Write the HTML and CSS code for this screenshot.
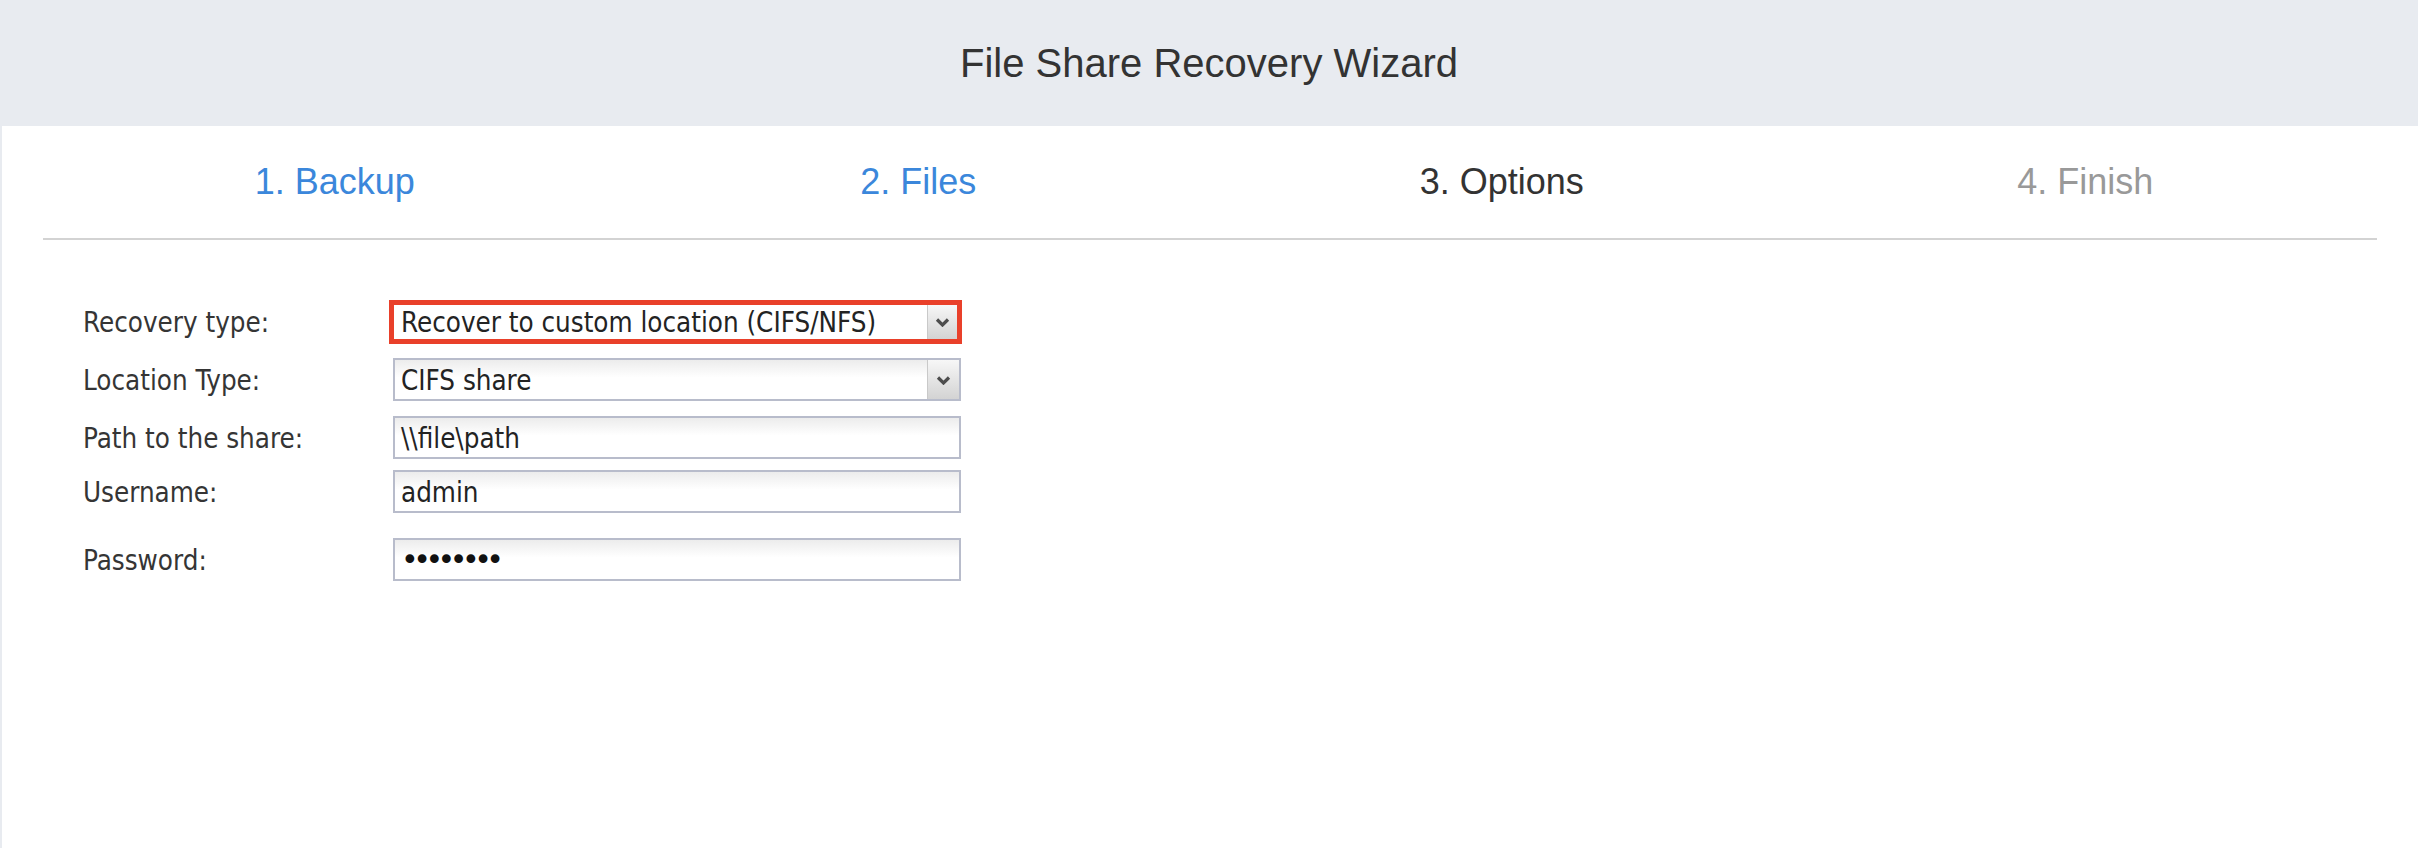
FILE: index.html
```html
<!DOCTYPE html>
<html lang="en">
<head>
<meta charset="utf-8">
<title>File Share Recovery Wizard</title>
<link rel="stylesheet" href="styles.css">
</head>
<body>
<header class="hdr">
  <h1 class="title">File Share Recovery Wizard</h1>
</header>
<main class="panel">
  <nav class="steps">
    <div class="step step-done">1. Backup</div>
    <div class="step step-done">2. Files</div>
    <div class="step step-current">3. Options</div>
    <div class="step step-next">4. Finish</div>
  </nav>
  <div class="divider"></div>
  <form class="form">
    <div class="row row-1">
      <div class="label">Recovery type:</div>
      <div class="box box-select box-red">
        <span class="val">Recover to custom location (CIFS/NFS)</span>
        <span class="btn"><svg class="chev" width="15" height="10" viewBox="0 0 15 10"><path d="M2 2.5 L7.5 8 L13 2.5" fill="none" stroke="#4d4d4d" stroke-width="3.2"/></svg></span>
      </div>
    </div>
    <div class="row row-2">
      <div class="label">Location Type:</div>
      <div class="box box-select">
        <span class="val">CIFS share</span>
        <span class="btn"><svg class="chev" width="15" height="10" viewBox="0 0 15 10"><path d="M2 2.5 L7.5 8 L13 2.5" fill="none" stroke="#4d4d4d" stroke-width="3.2"/></svg></span>
      </div>
    </div>
    <div class="row row-3">
      <div class="label">Path to the share:</div>
      <div class="box"><span class="val">\\file\path</span></div>
    </div>
    <div class="row row-4">
      <div class="label">Username:</div>
      <div class="box"><span class="val">admin</span></div>
    </div>
    <div class="row row-5">
      <div class="label">Password:</div>
      <div class="box"><span class="val dots">••••••••</span></div>
    </div>
  </form>
</main>
</body>
</html>
```
FILE: styles.css
```css
html, body {
  margin: 0;
  padding: 0;
}
body {
  background: #e8ebf0;
  font-family: "Liberation Sans", Arial, Helvetica, sans-serif;
  height: 848px;
  overflow: hidden;
  display: flex;
  flex-direction: column;
}
.hdr {
  height: 126px;
  flex: none;
  display: flex;
  align-items: center;
  justify-content: center;
}
.title {
  margin: 0;
  font-size: 40px;
  font-weight: normal;
  color: #333333;
  line-height: 126px;
}
.panel {
  flex: 1;
  margin-left: 2px;
  background: #ffffff;
}
.steps {
  display: grid;
  grid-template-columns: repeat(4, 1fr);
  margin: 0 41px;
  height: 112px;
  line-height: 112px;
  font-size: 36px;
  text-align: center;
}
.step-done { color: #3b87db; }
.step-current { color: #333333; }
.step-next { color: #999999; }
.divider {
  height: 2px;
  background: #d3d3d3;
  margin: 0 41px;
}
.form {
  padding: 60px 0 0 81px;
  font-family: "DejaVu Sans Condensed", "DejaVu Sans", Tahoma, sans-serif;
  font-size: 27.5px;
}
.row {
  display: flex;
  align-items: center;
  height: 43px;
}
.row-1 { height: 44px; }
.row-2 { margin-top: 14px; }
.row-3 { margin-top: 15px; }
.row-4 { margin-top: 11px; }
.row-5 { margin-top: 25px; }
.label {
  width: 310px;
  flex: none;
  color: #353535;
}
.box {
  box-sizing: border-box;
  width: 568px;
  height: 43px;
  border: 2px solid #b8bccb;
  background: linear-gradient(#ececec, #ffffff 45%);
  display: flex;
  align-items: center;
  padding-left: 6px;
  color: #232323;
}
.val {
  flex: 1;
  white-space: nowrap;
}
.box-select {
  padding-right: 0;
}
.box-red {
  border: 5px solid #e9402a;
  width: 573px;
  height: 44px;
  margin-left: -4px;
  padding-left: 7px;
  background: #ffffff;
}
.btn {
  flex: none;
  width: 32px;
  align-self: stretch;
  box-sizing: border-box;
  border-left: 1px solid #c9c9c9;
  background: linear-gradient(#f7f7f7, #d3d3d3);
  display: flex;
  align-items: center;
  justify-content: center;
}
.chev {
  display: block;
  flex: none;
}
.box-red .btn {
  width: 30px;
}
.dots {
  font-family: "DejaVu Sans", sans-serif;
  font-size: 30px;
  letter-spacing: -5.5px;
  color: #111111;
}
```
